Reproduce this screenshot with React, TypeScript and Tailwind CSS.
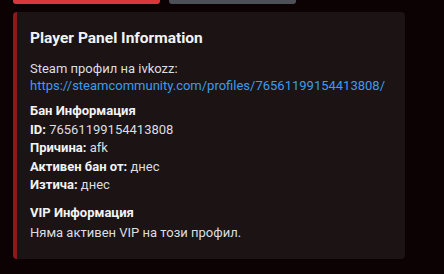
export default function App() {
  return (
    <div
      className="h-[274px] w-[444px] overflow-hidden bg-[#0c0203] text-[#dbdee1]"
      style={{ fontFamily: 'Roboto, "Noto Sans", sans-serif' }}
    >
      <div className="flex gap-[9px] pl-[13px]">
        <div className="h-[4px] w-[147px] rounded-b-[3px] bg-[#da373c]" />
        <div className="h-[4px] w-[127px] rounded-b-[3px] bg-[#4e5058]" />
      </div>

      <div className="ml-[13px] mt-[8px] w-[392px] rounded-[4px] border-l-4 border-[#8c1a1a] bg-[#1c1314] pb-[16px] pl-[13px] pr-4 pt-[16px]">
        <h2 className="text-[15.5px] font-bold leading-[20px] text-[#f2f3f5]">
          Player Panel Information
        </h2>

        <div className="mt-[12px] text-[13px] leading-[17px]">
          <div>Steam профил на ivkozz:</div>
          <a className="text-[#3b9cf0]" href="#">
            https://steamcommunity.com/profiles/76561199154413808/
          </a>
        </div>

        <div className="mt-[8px] text-[13px] leading-[18.5px]">
          <div className="font-bold text-[#f2f3f5]">Бан Информация</div>
          <div>
            <b className="text-[#f2f3f5]">ID:</b> 76561199154413808
          </div>
          <div>
            <b className="text-[#f2f3f5]">Причина:</b> afk
          </div>
          <div>
            <b className="text-[#f2f3f5]">Активен бан от:</b> днес
          </div>
          <div>
            <b className="text-[#f2f3f5]">Изтича:</b> днес
          </div>
        </div>

        <div className="mt-[8px] text-[13px] leading-[20px]">
          <div className="font-bold text-[#f2f3f5]">VIP Информация</div>
          <div>Няма активен VIP на този профил.</div>
        </div>
      </div>
    </div>
  );
}
